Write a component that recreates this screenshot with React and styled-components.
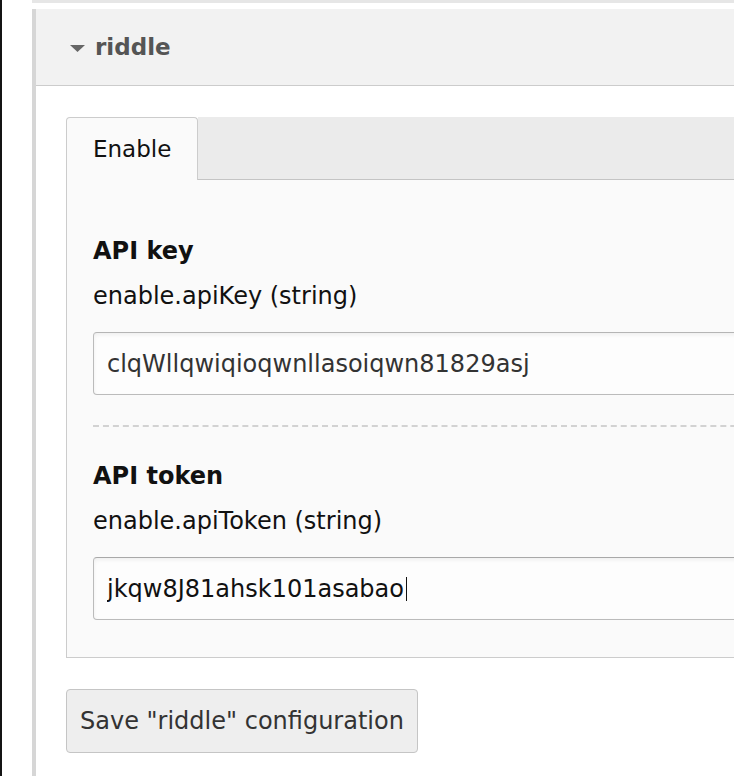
import React from "react"
import styled, { createGlobalStyle } from "styled-components"

const GlobalStyle = createGlobalStyle`
    html, body {
        margin: 0;
        padding: 0;
        background: #fff;
        overflow: hidden;
    }
    body {
        font-family: "DejaVu Sans", Verdana, sans-serif;
    }
`;

export default function App() {
    return (
        <>
            <GlobalStyle />
            <Page>
                <EdgeStrip />
                <Main>
                    <TopBar />
                    <Section>
                        <SectionHeader>
                            <Caret viewBox="0 0 15 7">
                                <path d="M0 0 L15 0 L7.5 7 Z" fill="#666" />
                            </Caret>
                            <SectionTitle>riddle</SectionTitle>
                        </SectionHeader>

                        <SectionBody>
                            <Tabs>
                                <Tab>Enable</Tab>
                                <TabFiller />
                            </Tabs>

                            <TabPanel>
                                <Field>
                                    <FieldTitle>API key</FieldTitle>
                                    <FieldDesc>enable.apiKey (string)</FieldDesc>
                                    <InputWrap>
                                        <TextInput
                                            type="text"
                                            defaultValue="clqWllqwiqioqwnllasoiqwn81829asj"
                                        />
                                    </InputWrap>
                                </Field>
                                <Field $last>
                                    <FieldTitle>API token</FieldTitle>
                                    <FieldDesc>enable.apiToken (string)</FieldDesc>
                                    <InputWrap>
                                        <TextInput
                                            type="text"
                                            $focused
                                            defaultValue="jkqw8J81ahsk101asabao"
                                        />
                                        <TextCursor style={{ left: 313 }} />
                                    </InputWrap>
                                </Field>
                            </TabPanel>

                            <SaveBtn>Save "riddle" configuration</SaveBtn>
                        </SectionBody>
                    </Section>
                </Main>
            </Page>
        </>
    )
}

const Page = styled.div`
    display: flex;
    width: 734px;
    height: 776px;
    overflow: hidden;
`;

const EdgeStrip = styled.div`
    width: 2px;
    flex-shrink: 0;
    background: #141414;
    margin-right: 30px;
`;

const Main = styled.div`
    flex: 1;
    min-width: 0;
    display: flex;
    flex-direction: column;
`;

const TopBar = styled.div`
    height: 3px;
    width: 1000px;
    background: #e6e6e6;
    margin-bottom: 6px;
`;

const Section = styled.div`
    flex: 1;
    width: 1000px;
    border-left: 4px solid #d6d6d6;
    display: flex;
    flex-direction: column;
`;

const SectionHeader = styled.div`
    height: 77px;
    background: #f2f2f2;
    border-bottom: 1px solid #cccccc;
    display: flex;
    align-items: center;
    padding-left: 34px;
    box-sizing: border-box;
`;

const Caret = styled.svg`
    width: 15px;
    height: 7px;
    margin-right: 10px;
    margin-top: 3px;
`;

const SectionTitle = styled.span`
    font-size: 23px;
    font-weight: 700;
    color: #555;
`;

const SectionBody = styled.div`
    padding: 31px 0 0 30px;
    display: flex;
    flex-direction: column;
    align-items: flex-start;
`;

const Tabs = styled.div`
    display: flex;
    width: 100%;
    height: 63px;
    box-sizing: border-box;
`;

const Tab = styled.div`
    width: 132px;
    box-sizing: border-box;
    background: #fafafa;
    border: 1px solid #cccccc;
    border-bottom: none;
    border-radius: 4px 4px 0 0;
    display: flex;
    align-items: center;
    padding-left: 26px;
    font-size: 23px;
    color: #111;
`;

const TabFiller = styled.div`
    flex: 1;
    background: #ebebeb;
    border-bottom: 1px solid #c4c4c4;
`;

const TabPanel = styled.div`
    width: 100%;
    box-sizing: border-box;
    background: #fafafa;
    border: 1px solid #cccccc;
    border-top: none;
    padding: 21px 0 6px 26px;
`;

const Field = styled.div`
    display: flex;
    flex-direction: column;
    padding: ${p => (p.$last ? "35px 0 31px" : "36px 0 30px")};
    border-bottom: ${p => (p.$last ? "none" : "2px dashed #d2d2d2")};
`;

const FieldTitle = styled.div`
    font-size: 24px;
    line-height: 29px;
    font-weight: 700;
    color: #111;
`;

const FieldDesc = styled.div`
    font-size: 24px;
    line-height: 29px;
    color: #111;
    margin-top: 16px;
`;

const InputWrap = styled.div`
    position: relative;
    margin-top: 21px;
`;

const TextInput = styled.input`
    display: block;
    height: 63px;
    box-sizing: border-box;
    width: 100%;
    border: 1px solid #bbbbbb;
    border-top-color: ${p => (p.$focused ? "#a8a8a8" : "#b5b5b5")};
    border-radius: 4px;
    background: #fdfdfd;
    box-shadow: inset 0 2px 4px rgba(0, 0, 0, 0.06);
    padding: 0 13px;
    font-family: "DejaVu Sans", Verdana, sans-serif;
    font-size: 24px;
    color: ${p => (p.$focused ? "#111" : "#333")};
    outline: none;
`;

const TextCursor = styled.span`
    position: absolute;
    top: 20px;
    width: 1px;
    height: 24px;
    background: #111;
`;

const SaveBtn = styled.button`
    margin-top: 31px;
    height: 64px;
    padding: 0 13px;
    background: #eeeeee;
    border: 1px solid #c5c5c5;
    border-radius: 4px;
    font-family: "DejaVu Sans", Verdana, sans-serif;
    font-size: 24px;
    color: #333;
    cursor: pointer;
`;
